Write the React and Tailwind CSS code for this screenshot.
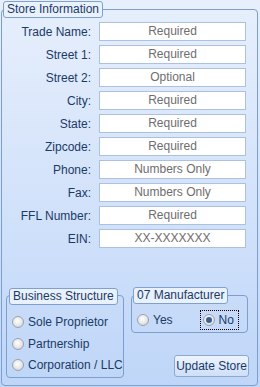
import React from 'react';

const FIELDS = [
  ['Trade Name:', 'Required'],
  ['Street 1:', 'Required'],
  ['Street 2:', 'Optional'],
  ['City:', 'Required'],
  ['State:', 'Required'],
  ['Zipcode:', 'Required'],
  ['Phone:', 'Numbers Only'],
  ['Fax:', 'Numbers Only'],
  ['FFL Number:', 'Required'],
  ['EIN:', 'XX-XXXXXXX'],
];

function Radio({ label, checked, focused }) {
  return (
    <div className="flex items-center h-[16px]">
      <div className={`flex items-center gap-[4px] ${focused ? 'outline outline-1 outline-dotted outline-black pl-[2px] pr-[4px] -ml-[2px]' : ''}`}>
        <span className="w-[12px] h-[12px] rounded-full border border-[#9aa3ad] bg-[radial-gradient(circle_at_45%_40%,#ffffff_0%,#e6e6e6_55%,#c8c8c8_100%)] flex items-center justify-center shrink-0">
          {checked && <span className="w-[6px] h-[6px] rounded-full bg-[#3d5f8f]" />}
        </span>
        <span>{label}</span>
      </div>
    </div>
  );
}

function Legend({ children, className = '' }) {
  return (
    <div className={`w-fit h-[17px] px-[3px] border border-[#7fa1cf] rounded-[3px] bg-[#e9f1fc] leading-[15px] text-[#1b3a66] ${className}`}>
      {children}
    </div>
  );
}

export default function App() {
  return (
    <div className="w-[260px] h-[387px] bg-linear-to-b from-[#e7effc] to-[#bfd6f8] pt-[9px] pl-[1px] pr-[2px] pb-[1px] font-['Liberation_Sans',Arial,sans-serif] text-[12px] text-[#1b3a66]">
      <div className="h-full border border-[#7c9fd0] rounded-[4px] flex flex-col">
        <Legend className="-mt-[9px] ml-[1px] w-[94px]">Store Information</Legend>

        {/* fields */}
        <div className="grid grid-cols-[89px_147px] gap-x-[8px] gap-y-[4px] mt-[4px]">
          {FIELDS.map(([label, hint]) => (
            <React.Fragment key={label}>
              <div className="text-right leading-[20px] h-[19px]">{label}</div>
              <div className="h-[19px] border border-[#abc1de] bg-white text-center leading-[17px] text-[#6e6e6e]">{hint}</div>
            </React.Fragment>
          ))}
        </div>

        {/* bottom groups */}
        <div className="mt-auto mb-[7px] flex items-end">
          <div className="ml-[4px] w-[118px] h-[83px] border border-[#7c9fd0] rounded-[4px] flex flex-col">
            <Legend className="-mt-[8px] ml-[2px] w-[105px] h-[16px] leading-[14px]">Business Structure</Legend>
            <div className="flex flex-col gap-[5.5px] pl-[5px] mt-[9px]">
              <Radio label="Sole Proprietor" />
              <Radio label="Partnership" />
              <Radio label="Corporation / LLC" />
            </div>
          </div>

          <div className="ml-[7px] w-[117px] flex flex-col">
            <div className="h-[38px] border border-[#7c9fd0] rounded-[4px] flex flex-col mb-[22px]">
              <Legend className="-mt-[9px] ml-[1px] w-[92px]">07 Manufacturer</Legend>
              <div className="flex items-center pl-[5px] mt-[8px]">
                <Radio label="Yes" />
                <div className="ml-[30px]">
                  <Radio label="No" checked focused />
                </div>
              </div>
            </div>
            <button className="self-end w-[75px] h-[22px] border border-[#8ea8cf] rounded-[3px] bg-linear-to-b from-[#eef4fd] to-[#cddff7] text-[#1b3a66] leading-[20px] -mr-[1px] mb-[1px]">
              Update Store
            </button>
          </div>
        </div>
      </div>
    </div>
  );
}
